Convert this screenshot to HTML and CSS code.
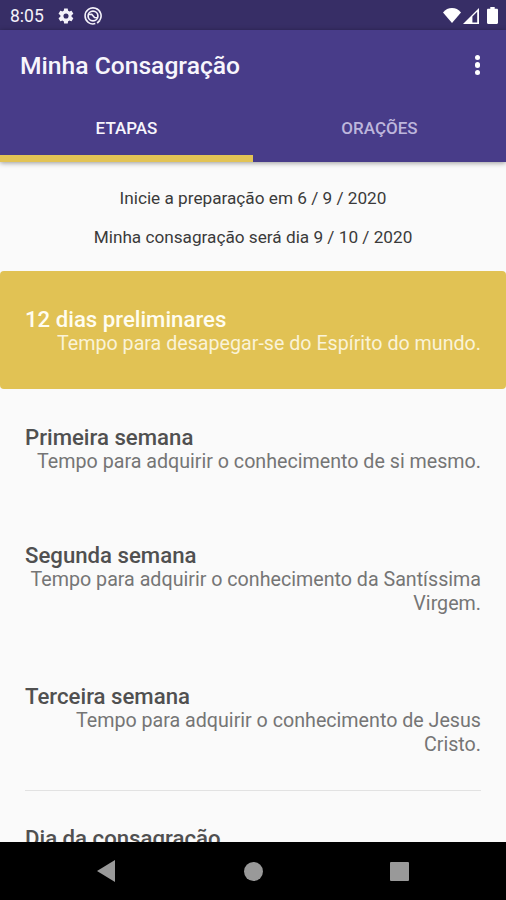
FILE: index.html
```html
<!DOCTYPE html>
<html lang="pt-BR">

<head>
  <meta charset="UTF-8" />
  <meta name="viewport" content="width=device-width, initial-scale=1.0" />
  <title>Minha Consagração</title>
  <link rel="stylesheet" href="styles.css">
</head>

<body>
  <div class="status-bar">
    <span class="clock">8:05</span>
    <svg class="gear" width="18" height="18" viewBox="0 0 24 24"><path fill="currentColor" fill-rule="evenodd" d="M19.4 13a7.5 7.5 0 0 0 0-2l2.1-1.6c.2-.2.3-.4.1-.7l-2-3.4c-.1-.2-.4-.3-.6-.2l-2.5 1a7.3 7.3 0 0 0-1.7-1l-.4-2.6c0-.3-.2-.5-.5-.5h-4c-.3 0-.5.2-.5.5L9 5.1a7.3 7.3 0 0 0-1.7 1l-2.5-1c-.2-.1-.5 0-.6.2l-2 3.4c-.1.3-.1.5.1.7L4.5 11a7.5 7.5 0 0 0 0 2l-2.2 1.6c-.2.2-.2.4-.1.7l2 3.4c.1.2.4.3.6.2l2.5-1a7.3 7.3 0 0 0 1.7 1l.4 2.6c0 .3.2.5.5.5h4c.3 0 .5-.2.5-.5l.4-2.6a7.3 7.3 0 0 0 1.7-1l2.5 1c.2.1.5 0 .6-.2l2-3.4c.1-.3.1-.5-.1-.7zM12 15.4a3.4 3.4 0 1 1 0-6.8 3.4 3.4 0 0 1 0 6.8z"/></svg>
    <svg class="sync" width="18" height="18" viewBox="0 0 18 18" fill="none" stroke="currentColor"><path stroke-width="1.6" d="M11.3 16.6A8 8 0 1 1 15.7 13.4"/><circle cx="9" cy="9" r="4.9" stroke-width="1.7"/><path stroke-width="1.6" d="M5 7.5l2.7-.2 2.8 3.2 2.5.3"/><path stroke-width="1.7" d="M13.2 16.2l2.6-2.8"/></svg>
    <div class="signals">
      <svg width="18" height="15" viewBox="0 0 18 15"><path fill="currentColor" d="M9 15L0 4.4C2.5 1.5 5.5 0 9 0s6.5 1.5 9 4.4z"/></svg>
      <svg width="16" height="16" viewBox="0 0 16 16"><path fill="currentColor" fill-rule="evenodd" d="M0 16L16 0v16zM9.4 8.6v5.8h4.8V3.8z"/></svg>
      <svg class="battery" width="11" height="17" viewBox="0 0 11 17"><path fill="currentColor" d="M3.3 0h4.4v1.7h2.1c.7 0 1.2.5 1.2 1.2v12.9c0 .7-.5 1.2-1.2 1.2H1.2C.5 17 0 16.5 0 15.8V2.9c0-.7.5-1.2 1.2-1.2h2.1z"/></svg>
    </div>
  </div>

  <header>
    <div class="toolbar">
      <h1>Minha Consagração</h1>
      <div class="menu"><span></span><span></span><span></span></div>
    </div>
    <nav class="tabs">
      <div class="tab active">ETAPAS</div>
      <div class="tab">ORAÇÕES</div>
    </nav>
  </header>

  <main>
    <div class="dates">
      <p>Inicie a preparação em 6 / 9 / 2020</p>
      <p>Minha consagração será dia 9 / 10 / 2020</p>
    </div>

    <section class="step current">
      <h2>12 dias preliminares</h2>
      <p>Tempo para desapegar-se do Espírito do mundo.</p>
    </section>
    <section class="step">
      <h2>Primeira semana</h2>
      <p>Tempo para adquirir o conhecimento de si mesmo.</p>
    </section>
    <section class="step">
      <h2>Segunda semana</h2>
      <p>Tempo para adquirir o conhecimento da Santíssima Virgem.</p>
    </section>
    <section class="step">
      <h2>Terceira semana</h2>
      <p>Tempo para adquirir o conhecimento de Jesus Cristo.</p>
    </section>
    <hr>
    <section class="step">
      <h2>Dia da consagração</h2>
    </section>
  </main>

  <footer>
    <svg width="18" height="22" viewBox="0 0 18 22"><path fill="currentColor" d="M18 0v22L0 11z"/></svg>
    <div class="home"></div>
    <div class="recent"></div>
  </footer>
</body>

</html>
```

FILE: styles.css
```css
* {
  margin: 0;
  padding: 0;
  box-sizing: border-box;
}

body {
  display: flex;
  flex-direction: column;
  height: 100vh;
  overflow: hidden;
  background: #fafafa;
  font-family: Roboto, sans-serif;
}

svg {
  display: block;
}

.status-bar {
  display: flex;
  align-items: center;
  flex: none;
  height: 30px;
  padding: 1px 8px 0 10px;
  background: #372e66;
  color: #f4f2fa;
}

.clock {
  width: 47px;
  font-size: 17.5px;
}

.sync {
  margin-left: 9px;
}

.signals {
  display: flex;
  align-items: center;
  margin-left: auto;
  color: white;
}

.signals svg + svg {
  margin-left: 2px;
}

.signals .battery {
  margin-left: 8px;
}

header {
  flex: none;
  height: 132px;
  background: #483c89;
  color: white;
  box-shadow: 0 1px 5px rgba(0, 0, 0, 0.4);
  z-index: 1;
}

.toolbar {
  display: flex;
  justify-content: space-between;
  align-items: center;
  height: 70px;
  padding: 0 26px 0 20px;
}

h1 {
  font-size: 24.65px;
  font-weight: 500;
  color: #f7f5fc;
}

.menu {
  display: flex;
  flex-direction: column;
  gap: 2px;
}

.menu span {
  width: 5.5px;
  height: 5.5px;
  border-radius: 50%;
  background: white;
}

.tabs {
  display: flex;
  height: 62px;
}

.tab {
  flex: 1;
  padding-top: 17px;
  text-align: center;
  font-size: 17px;
  font-weight: 500;
  line-height: 22px;
  color: #bdb6dc;
}

.tab.active {
  color: #f7f5fc;
  border-bottom: 7px solid #e2c355;
}

main {
  flex: 1;
  min-height: 0;
  overflow: hidden;
}

.dates {
  height: 109px;
  padding-top: 17px;
  text-align: center;
  font-size: 17.2px;
  line-height: 39px;
  color: #3a3a3a;
}

.step {
  padding: 36px 25px 32.8px;
}

.step h2 {
  margin-bottom: 1px;
  font-size: 22.2px;
  font-weight: 500;
  line-height: 24px;
  color: #505050;
}

.step p {
  font-size: 19.67px;
  line-height: 24px;
  text-align: right;
  color: #757575;
}

.step.current {
  background: #e1c254;
  border-radius: 4px;
}

.step.current h2 {
  color: #fffdf0;
}

.step.current p {
  color: #faf3d8;
}

hr {
  height: 1px;
  margin: 0 25px -1px;
  border: none;
  background: #e2e2e2;
}

footer {
  display: flex;
  justify-content: space-between;
  align-items: center;
  flex: none;
  height: 58px;
  padding: 0 97px;
  background: black;
  color: #999;
}

.home {
  width: 19px;
  height: 19px;
  margin-left: 2px;
  border-radius: 50%;
  background: #999;
}

.recent {
  width: 19px;
  height: 19px;
  border-radius: 1px;
  background: #999;
}
```
